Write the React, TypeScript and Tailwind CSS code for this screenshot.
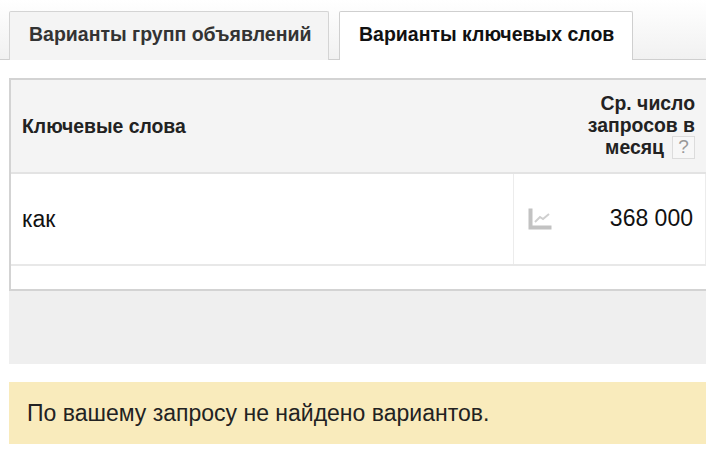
const TrendIcon = () => (
  <svg width="24" height="23" viewBox="0 0 24 23" className="shrink-0">
    <path d="M0.5 0.5h4v17h19v4h-23z" fill="#c2c2c2" />
    <path d="M7 14l5-5 3 2 6-5" fill="none" stroke="#cfcfcf" strokeWidth="2" />
  </svg>
)

const App = () => {
  return (
    <div className="w-[706px] h-[452px] overflow-hidden bg-white font-['Liberation_Sans',Arial,sans-serif] text-[#111]">
      <div className="h-[60px] bg-gradient-to-b from-white to-[#f1f1f1] border-b border-[#cfcfcf] flex items-end pl-[9px] gap-[10px]">
        <div className="w-[320px] h-[49px] -mb-px bg-[#f4f4f4] border border-b-0 border-[#d4d4d4] rounded-t-[2px] flex items-center pl-[19px] pb-[2px] text-[19.5px] font-bold text-[#333]">
          Варианты групп объявлений
        </div>
        <div className="w-[294px] h-[49px] -mb-px bg-white border border-b-0 border-[#cfcfcf] rounded-t-[2px] flex items-center pl-[19px] pb-[2px] text-[19.5px] font-bold">
          Варианты ключевых слов
        </div>
      </div>

      <div className="ml-[9px] mt-[18px] border-2 border-r-0 border-[#d3d3d3] h-[213px]">
        <div className="h-[94px] bg-[#f4f4f4] border-b-2 border-[#e3e3e3] flex items-center justify-between pl-[11px] pr-[11px]">
          <span className="text-[19.4px] font-bold text-[#222] pt-[2px]">Ключевые слова</span>
          <div className="w-[130px] text-right text-[19.4px] leading-[22px] font-bold text-[#222] pb-[2px]">
            Ср. число запросов в
            <div className="flex justify-end items-center gap-[8px]">
              месяц
              <span className="w-[23px] h-[23px] border border-[#dcdcdc] bg-[#f7f7f7] flex items-center justify-center text-[19px] font-normal text-[#999]">?</span>
            </div>
          </div>
        </div>
        <div className="h-[92px] border-b-2 border-[#e8e8e8] flex">
          <div className="w-[503px] border-r border-[#ececec] flex items-center pl-[11px] text-[23px]">как</div>
          <div className="flex-1 flex items-center justify-between pl-[14px] pr-[12px] border-r border-[#ececec]">
            <TrendIcon />
            <span className="text-[23px] pb-[2px]">368 000</span>
          </div>
        </div>
      </div>

      <div className="ml-[9px] h-[73px] bg-[#efefef]" />

      <div className="ml-[9px] mt-[18px] h-[62px] bg-[#f9ebbc] flex items-center pl-[18px] text-[23px] text-[#222]">
        По вашему запросу не найдено вариантов.
      </div>
    </div>
  )
}

export default App
